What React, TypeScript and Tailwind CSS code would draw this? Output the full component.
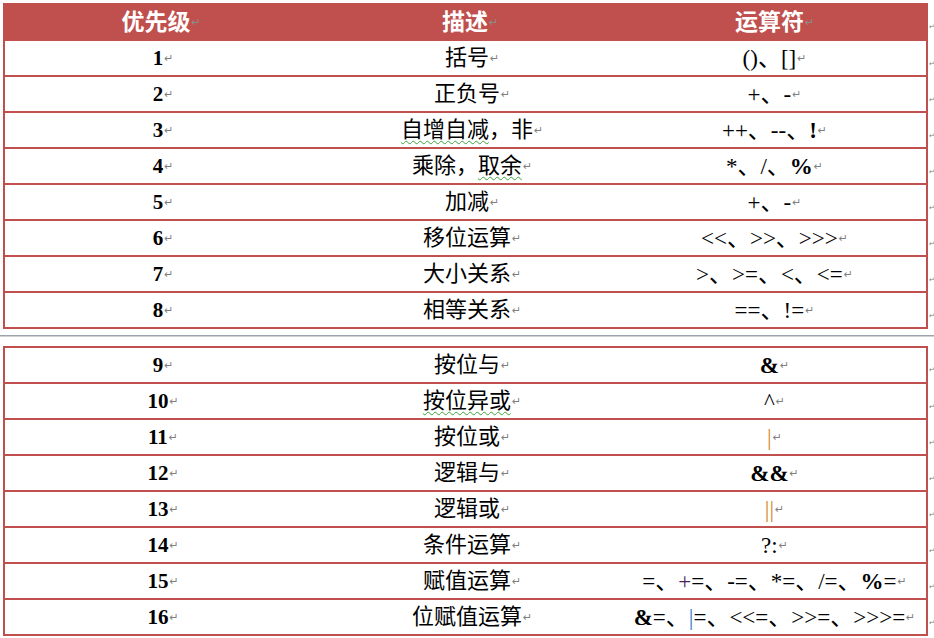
import React from 'react'

const RED = 'border-[#c0504d]'

type Row = { n: string; desc: React.ReactNode; op: React.ReactNode }

function Mark({ dark, small }: { dark?: boolean; small?: boolean }) {
  return (
    <span
      className={`font-['DejaVu_Sans',sans-serif] font-normal leading-none ${small ? 'text-[7px]' : 'ml-[1px] text-[11px]'} ${
        dark ? 'text-[#8c8c8c]' : 'text-[#7f7f7f]'
      }`}
    >
      ↵
    </span>
  )
}

function Wavy({ children }: { children: React.ReactNode }) {
  return (
    <span className="underline decoration-wavy decoration-[#3fa33f] decoration-1 underline-offset-[3px]">
      {children}
    </span>
  )
}

const first: Row[] = [
  { n: '1', desc: '括号', op: '()、[]' },
  { n: '2', desc: '正负号', op: '+、-' },
  { n: '3', desc: <><Wavy>自增自减</Wavy>，非</>, op: <>++、--、<b>!</b></> },
  { n: '4', desc: <>乘除，<Wavy>取余</Wavy></>, op: <>*、/、<b>%</b></> },
  { n: '5', desc: '加减', op: '+、-' },
  { n: '6', desc: '移位运算', op: '<<、>>、>>>' },
  { n: '7', desc: '大小关系', op: '>、>=、<、<=' },
  { n: '8', desc: '相等关系', op: '==、!=' },
]

const second: Row[] = [
  { n: '9', desc: '按位与', op: <b>&amp;</b> },
  { n: '10', desc: <Wavy>按位异或</Wavy>, op: '^' },
  { n: '11', desc: '按位或', op: <span className="text-[#d4892a]">|</span> },
  { n: '12', desc: '逻辑与', op: <b>&amp;&amp;</b> },
  { n: '13', desc: '逻辑或', op: <span className="text-[#d4892a]">||</span> },
  { n: '14', desc: '条件运算', op: '?:' },
  {
    n: '15',
    desc: '赋值运算',
    op: <>=、<span className="text-[#4b1f5e]">+</span>=、-=、*=、/=、<b>%</b>=</>,
  },
  {
    n: '16',
    desc: '位赋值运算',
    op: <><b>&amp;</b>=、<span className="text-[#2f74d0]">|</span>=、&lt;&lt;=、&gt;&gt;=、&gt;&gt;&gt;=</>,
  },
]

function Cells({ row }: { row: Row }) {
  return (
    <>
      <div className="flex w-[316px] items-center justify-center text-[21px] font-bold">
        {row.n}
        <Mark />
      </div>
      <div className="flex w-[302px] items-center justify-center text-[22px]">
        <span>{row.desc}</span>
        <Mark />
      </div>
      <div className="flex flex-1 items-center justify-center text-[23px]">
        <span>{row.op}</span>
        <Mark />
      </div>
    </>
  )
}

function Line({ row, top }: { row: Row; top?: boolean }) {
  return (
    <div className="flex items-center">
      <div
        className={`flex w-[925px] shrink-0 border-x-2 border-b-2 ${RED} ${top ? 'h-[38px] border-t-2' : 'h-[36px]'}`}
      >
        <Cells row={row} />
      </div>
      <span className="ml-[1px] mt-[4px]">
        <Mark small />
      </span>
    </div>
  )
}

export default function App() {
  return (
    <div className="h-[638px] w-[934px] overflow-hidden bg-white pt-[3px] font-['Liberation_Serif','Noto_Sans_CJK_SC',serif] leading-none text-black">
      <div className="pl-[3px]">
        <div className="flex items-center">
          <div className="flex h-[38px] w-[925px] shrink-0 bg-[#c0504d] text-[23px] font-bold text-white">
            <div className="flex w-[316px] items-center justify-center">
              优先级
              <Mark dark />
            </div>
            <div className="flex w-[302px] items-center justify-center">
              描述
              <Mark dark />
            </div>
            <div className="flex flex-1 items-center justify-center">
              运算符
              <Mark dark />
            </div>
          </div>
          <span className="ml-[1px] mt-[4px]">
            <Mark small />
          </span>
        </div>
        {first.map((r) => (
          <Line key={r.n} row={r} />
        ))}
      </div>

      <div className="mt-[6px] h-[2px] w-full border-t border-[#9ea3a8] bg-[#cfd2d5]" />

      <div className="mt-[9px] pl-[3px]">
        {second.map((r, i) => (
          <Line key={r.n} row={r} top={i === 0} />
        ))}
      </div>
    </div>
  )
}
